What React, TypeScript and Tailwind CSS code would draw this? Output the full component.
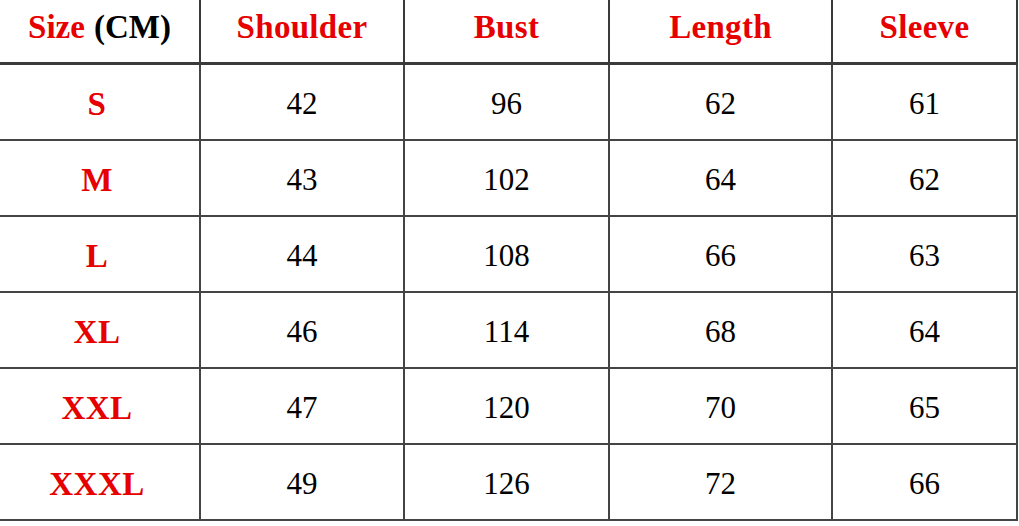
const rows = [
  ['S', '42', '96', '62', '61'],
  ['M', '43', '102', '64', '62'],
  ['L', '44', '108', '66', '63'],
  ['XL', '46', '114', '68', '64'],
  ['XXL', '47', '120', '70', '65'],
  ['XXXL', '49', '126', '72', '66'],
];

const headers = ['Shoulder', 'Bust', 'Length', 'Sleeve'];

export default function App() {
  return (
    <div className="h-[526px] w-[1019px] overflow-hidden bg-white font-['Liberation_Serif',serif]">
      <div className="grid w-[1018px] grid-cols-[201px_204px_205px_223px_185px]">
        {/* header row */}
        <div className="flex h-[65px] items-center justify-center border-r-2 border-b-[3px] border-[#3a3a3a] pb-[6px] text-[33px] font-bold">
          <span className="text-[#e60000]">Size</span>
          <span className="ml-[9px] text-black">(CM)</span>
        </div>
        {headers.map((h) => (
          <div
            key={h}
            className="flex h-[65px] items-center justify-center border-r-2 border-b-[3px] border-[#3a3a3a] pb-[6px] text-[33px] font-bold tracking-[0.3px] text-[#e60000]"
          >
            {h}
          </div>
        ))}

        {rows.map((r) =>
          r.map((v, i) => (
            <div
              key={r[0] + i}
              className={
                i === 0
                  ? 'flex h-[76px] items-center justify-center border-r-2 border-b-2 border-[#444] pt-[5px] pr-[5px] text-[33px] font-bold tracking-[0.5px] text-[#e60000]'
                  : 'flex h-[76px] items-center justify-center border-r-2 border-b-2 border-[#444] pt-[5px] text-[31px] text-black'
              }
            >
              {v}
            </div>
          )),
        )}
      </div>
    </div>
  );
}
